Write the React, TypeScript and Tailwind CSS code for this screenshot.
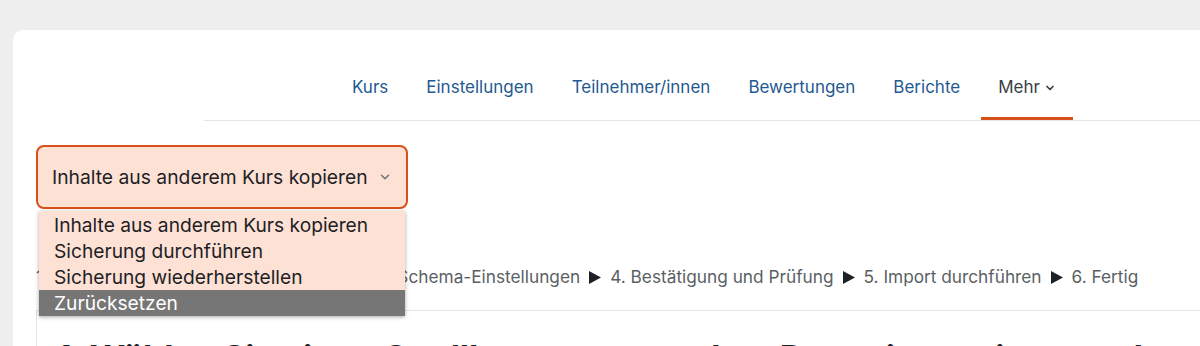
import { ChevronDown } from "lucide-react";

const NAV_ITEMS = ["Kurs", "Einstellungen", "Teilnehmer/innen", "Bewertungen", "Berichte"];

const OPTIONS = [
  "Inhalte aus anderem Kurs kopieren",
  "Sicherung durchführen",
  "Sicherung wiederherstellen",
  "Zurücksetzen",
];

const STEPS = [
  "1. Kursauswahl",
  "2. Ersteinstellungen",
  "3. Schema-Einstellungen",
  "4. Bestätigung und Prüfung",
  "5. Import durchführen",
  "6. Fertig",
];

function StepArrow() {
  return (
    <svg width="12" height="13" viewBox="0 0 12 13" className="mx-[9px] inline-block align-[-1px]">
      <polygon points="0,0 12,6.5 0,13" fill="#1d2125" />
    </svg>
  );
}

export default function App() {
  return (
    <div className="h-[346px] overflow-hidden bg-[#eeeeee] pl-[13px] pt-[30px] font-['Inter',sans-serif]">
      <div className="relative h-full rounded-tl-[10px] bg-white pl-[23px] pt-[24px]">
        {/* Secondary navigation */}
        <nav className="ml-[168px] flex border-b border-[#e5e5e5] pl-[129px]">
          {NAV_ITEMS.map((item) => (
            <a
              key={item}
              className="flex h-[66px] items-center border-b-[3px] border-transparent px-[19px] pt-[4px] text-[17px] text-[#1f5a92]"
            >
              {item}
            </a>
          ))}
          <a className="ml-[2px] flex h-[66px] items-center gap-[4px] border-b-[3px] border-[#d8501a] px-[17px] pt-[4px] text-[17px] text-[#3a3f44]">
            Mehr
            <ChevronDown size={12} strokeWidth={3.5} />
          </a>
        </nav>

        {/* Action select */}
        <div className="relative mt-[24px] w-[372px]">
          <div className="flex h-[64px] items-center justify-between rounded-[8px] border-2 border-[#d8501a] bg-[#fde1d5] pl-[14px] pr-[14px] text-[19.3px] text-[#1d2125]">
            <span>Inhalte aus anderem Kurs kopieren</span>
            <ChevronDown size={14} strokeWidth={2.5} className="text-[#6a737b]" />
          </div>
          <ul className="absolute left-[3px] top-[66px] z-10 w-[366px] bg-[#fde1d5] pt-[1px] text-[19.2px] leading-[26px] text-[#1d2125] shadow-[0_1px_4px_rgba(0,0,0,0.35)]">
            {OPTIONS.map((opt, i) => (
              <li
                key={opt}
                className={`px-[15px] ${i === OPTIONS.length - 1 ? "bg-[#767676] text-white" : ""}`}
              >
                {opt}
              </li>
            ))}
          </ul>
        </div>

        {/* Import steps */}
        <p className="mt-[56px] whitespace-nowrap text-[17.25px] leading-[24px] text-[#5a5f64]">
          {STEPS.map((step, i) => (
            <span key={step}>
              {i > 0 && <StepArrow />}
              {step}
            </span>
          ))}
        </p>

        <div className="mt-[21px] border-l border-t border-[#e5e5e5] pl-[20px] pt-[27px]">
          <h2 className="whitespace-nowrap text-[34px] font-bold leading-[40px] text-[#1d2125]">
            1. Wählen Sie einen Quellkurs aus, von dem Daten importiert werden sollen
          </h2>
        </div>
      </div>
    </div>
  );
}
